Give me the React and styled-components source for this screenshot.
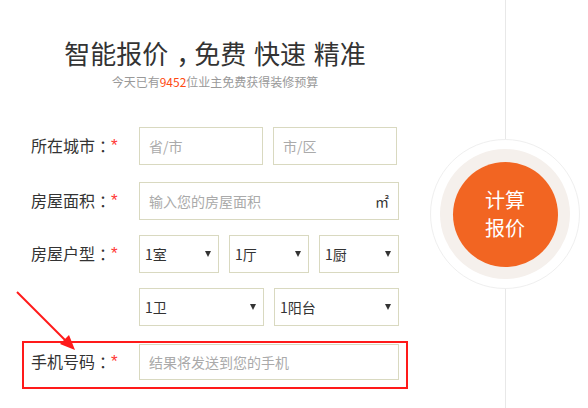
import React from "react";
import styled, { createGlobalStyle } from "styled-components";

const GlobalStyle = createGlobalStyle`
  html, body { margin: 0; padding: 0; background: #fff; }
  body {
    font-family: "Noto Sans CJK SC", "Noto Sans", sans-serif;
    color: #333;
  }
  * { box-sizing: border-box; }
`;

const Page = styled.div`
  position: relative;
  width: 588px;
  height: 408px;
  overflow: hidden;
  display: flex;
  align-items: flex-start;
`;

const LeftPanel = styled.div`
  width: 430px;
  display: flex;
  flex-direction: column;
  align-items: stretch;
`;

const Title = styled.h1`
  margin: 38px 0 0;
  font-size: 26px;
  line-height: 30px;
  font-weight: 400;
  color: #333;
  text-align: center;
  word-spacing: 2px;
  white-space: nowrap;
`;

const Punct = styled.span`
  margin-left: ${(p) => p.$shift}px;
  letter-spacing: -${(p) => p.$shift}px;
`;

const Subtitle = styled.p`
  margin: 6px 0 0;
  font-size: 12px;
  line-height: 16px;
  color: #999;
  text-align: center;
`;

const Count = styled.span`
  color: #ff4a12;
`;

const Form = styled.div`
  margin-top: 37px;
  padding-left: 22px;
  display: flex;
  flex-direction: column;
`;

const Row = styled.div`
  display: flex;
  align-items: center;
  padding-left: 9px;
  margin-top: ${(p) => p.$mt || 0}px;
`;

const HighlightRow = styled.div`
  display: flex;
  align-items: center;
  width: 386px;
  margin-top: ${(p) => p.$mt || 0}px;
  border: 2px solid #ff1a1a;
  padding: 1px 7px 7px 7px;
`;

const Label = styled.div`
  width: 108px;
  flex: none;
  font-size: 16px;
  line-height: 20px;
  color: #333;
  white-space: nowrap;
`;

const Star = styled.span`
  color: #ff3636;
  font-family: "Liberation Sans", Arial, sans-serif;
  font-size: 17px;
  position: relative;
  top: -1px;
`;

const Fields = styled.div`
  display: flex;
  gap: 10px;
`;

const TextField = styled.div`
  position: relative;
  width: ${(p) => p.$w}px;
  height: ${(p) => p.$h || 38}px;
  border: 1px solid #d9d9c0;
  background: #fff;
  display: flex;
  align-items: center;
`;

const Input = styled.input`
  flex: 1;
  min-width: 0;
  height: 100%;
  border: 0;
  outline: none;
  background: transparent;
  padding: 0 0 0 9px;
  font-family: "Noto Sans CJK SC", sans-serif;
  font-size: 14px;
  color: #333;
  &::placeholder { color: #aaa; }
`;

const Unit = styled.span`
  padding-right: 9px;
  font-size: 14px;
  color: #333;
`;

const SelectBox = styled.div`
  width: ${(p) => p.$w}px;
  height: 38px;
  border: 1px solid #d9d9c0;
  background: #fff;
  display: flex;
  align-items: center;
  justify-content: space-between;
  padding: 0 7px 0 5px;
  font-size: 14px;
  color: #333;
  cursor: pointer;
`;

const Arrow = styled.span`
  width: 0;
  height: 0;
  border-left: 3px solid transparent;
  border-right: 3px solid transparent;
  border-top: 6px solid #333;
`;

const SidePanel = styled.div`
  width: 150px;
  height: 408px;
  padding-top: 139px;
  display: flex;
  justify-content: center;
  align-items: flex-start;
  background: linear-gradient(#e8e8e8, #e8e8e8) 75px 0 / 1px 100% no-repeat;
`;

const OuterRing = styled.div`
  width: 150px;
  height: 150px;
  border-radius: 50%;
  background: #fff;
  border: 1px solid #efefef;
  display: flex;
  align-items: center;
  justify-content: center;
`;

const MiddleRing = styled.div`
  width: 130px;
  height: 130px;
  border-radius: 50%;
  background: #f5f0ec;
  display: flex;
  align-items: center;
  justify-content: center;
`;

const CalcButton = styled.button`
  width: 105px;
  height: 105px;
  border-radius: 50%;
  border: 0;
  background: #f26522;
  color: #fff;
  font-family: "Noto Sans CJK SC", sans-serif;
  font-size: 20px;
  line-height: 28px;
  padding: 0;
  cursor: pointer;
  display: flex;
  flex-direction: column;
  align-items: center;
  justify-content: center;
`;

const Annotation = styled.svg`
  position: absolute;
  left: 0;
  top: 0;
  pointer-events: none;
`;

function Select({ w, value }) {
  return (
    <SelectBox $w={w}>
      <span>{value}</span>
      <Arrow />
    </SelectBox>
  );
}

function FieldLabel({ children }) {
  return (
    <Label>
      {children}
      <Punct $shift={4}>：</Punct>
      <Star>*</Star>
    </Label>
  );
}

export default function App() {
  return (
    <>
      <GlobalStyle />
      <Page>
        <LeftPanel>
          <Title>
            智能报价<Punct $shift={8}>，</Punct>免费 快速 精准
          </Title>
          <Subtitle>
            今天已有<Count>9452</Count>位业主免费获得装修预算
          </Subtitle>
          <Form>
            <Row>
              <FieldLabel>所在城市</FieldLabel>
              <Fields>
                <TextField $w={124}>
                  <Input placeholder="省/市" />
                </TextField>
                <TextField $w={124}>
                  <Input placeholder="市/区" />
                </TextField>
              </Fields>
            </Row>
            <Row $mt={17}>
              <FieldLabel>房屋面积</FieldLabel>
              <TextField $w={260}>
                <Input placeholder="输入您的房屋面积" />
                <Unit>㎡</Unit>
              </TextField>
            </Row>
            <Row $mt={15}>
              <FieldLabel>房屋户型</FieldLabel>
              <Fields>
                <Select w={80} value="1室" />
                <Select w={80} value="1厅" />
                <Select w={80} value="1厨" />
              </Fields>
            </Row>
            <Row $mt={15}>
              <Label />
              <Fields>
                <Select w={125} value="1卫" />
                <Select w={125} value="1阳台" />
              </Fields>
            </Row>
            <HighlightRow $mt={15}>
              <FieldLabel>手机号码</FieldLabel>
              <TextField $w={260} $h={36}>
                <Input placeholder="结果将发送到您的手机" />
              </TextField>
            </HighlightRow>
          </Form>
        </LeftPanel>
        <SidePanel>
          <OuterRing>
            <MiddleRing>
              <CalcButton>
                <span>计算</span>
                <span>报价</span>
              </CalcButton>
            </MiddleRing>
          </OuterRing>
        </SidePanel>
        <Annotation width="588" height="408" viewBox="0 0 588 408">
          <line x1="17" y1="292" x2="66" y2="341" stroke="#ff1a1a" strokeWidth="2" />
          <polygon points="75,350 60,344 69,335" fill="#ff1a1a" />
        </Annotation>
      </Page>
    </>
  );
}
